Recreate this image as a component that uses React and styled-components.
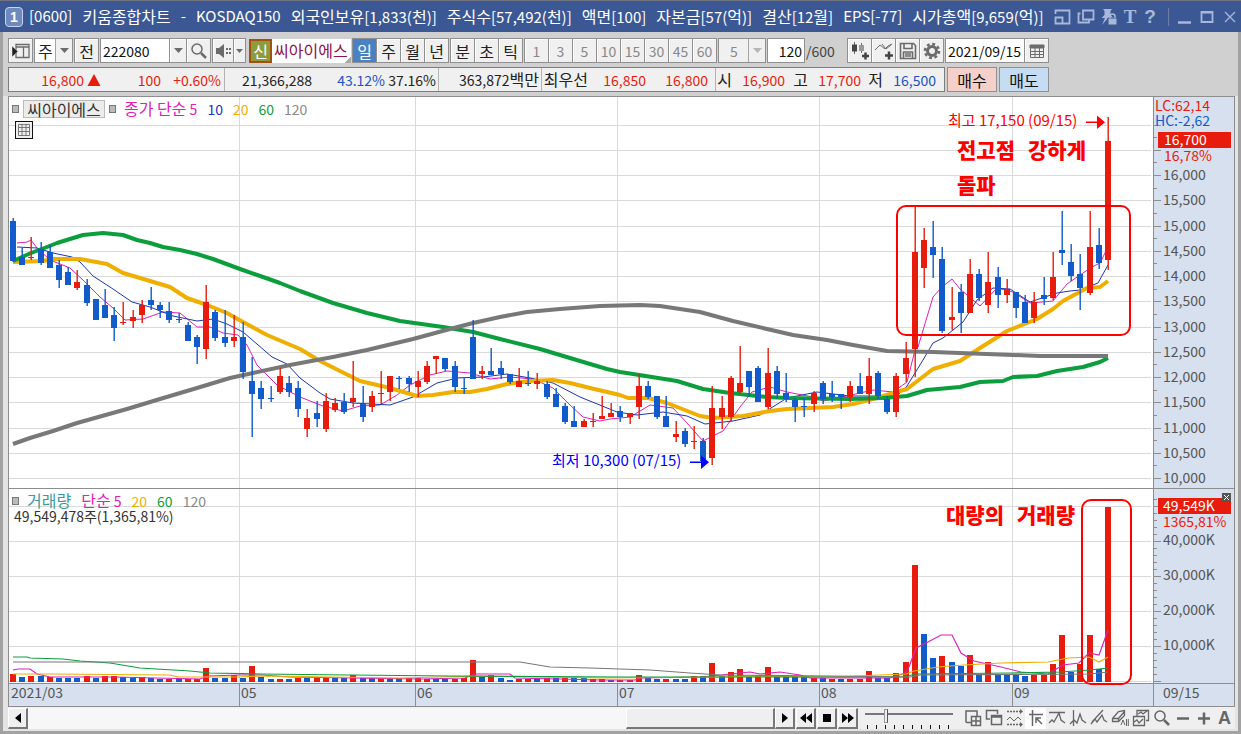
import { useState } from "react";
import styled, { createGlobalStyle } from "styled-components";

const RED = "#e81c0c";
const BLUE = "#115bcb";
const ICON = "#6b6b6b";

// one entry per trading day: [color, high, body top, body bottom, low]
const candles = [
  ["b", 218, 221, 261, 262], ["b", 248, 257, 265, 265], ["r", 237, 257, 258, 260], ["b", 242, 249, 263, 265],
  ["b", 245, 252, 268, 268], ["b", 260, 265, 280, 288], ["b", 267, 272, 285, 285], ["r", 270, 282, 288, 290],
  ["b", 279, 285, 303, 306], ["b", 299, 299, 320, 320], ["b", 289, 305, 318, 318], ["b", 307, 315, 328, 341],
  ["r", 302, 322, 323, 325], ["r", 310, 317, 321, 328], ["r", 300, 305, 315, 323], ["b", 287, 300, 305, 310],
  ["b", 302, 305, 310, 318], ["b", 302, 311, 320, 323], ["b", 313, 319, 320, 323], ["b", 322, 325, 341, 341],
  ["b", 335, 337, 347, 364], ["r", 285, 302, 349, 359], ["b", 310, 312, 338, 341], ["b", 310, 337, 343, 347],
  ["r", 315, 337, 341, 347], ["b", 322, 337, 372, 379], ["b", 357, 381, 394, 437], ["b", 381, 388, 399, 409],
  ["b", 386, 398, 399, 402], ["r", 368, 376, 392, 394], ["b", 376, 383, 392, 397], ["b", 381, 388, 409, 417],
  ["r", 409, 418, 429, 437], ["b", 401, 413, 419, 427], ["r", 393, 401, 429, 432], ["r", 398, 403, 410, 412],
  ["b", 393, 402, 412, 414], ["r", 361, 398, 402, 407], ["b", 386, 404, 417, 422], ["r", 391, 396, 407, 412],
  ["r", 371, 393, 394, 404], ["r", 376, 376, 392, 401], ["b", 376, 378, 379, 389], ["b", 376, 378, 384, 392],
  ["r", 371, 381, 387, 397], ["r", 361, 366, 382, 384], ["r", 356, 356, 359, 374], ["b", 358, 358, 369, 371],
  ["b", 361, 366, 387, 392], ["b", 378, 388, 389, 394], ["b", 320, 337, 379, 379], ["r", 366, 371, 374, 379],
  ["b", 348, 371, 375, 375], ["b", 361, 368, 374, 379], ["b", 374, 374, 382, 384], ["r", 368, 381, 387, 387],
  ["b", 371, 383, 384, 386], ["r", 373, 381, 384, 389], ["b", 381, 384, 397, 399], ["b", 388, 394, 407, 407],
  ["b", 403, 406, 422, 424], ["b", 406, 421, 427, 427], ["r", 419, 421, 427, 427], ["r", 413, 421, 422, 427],
  ["r", 396, 416, 419, 419], ["r", 403, 413, 417, 417], ["b", 406, 411, 417, 422], ["r", 413, 413, 417, 424],
  ["r", 374, 386, 407, 419], ["b", 381, 386, 397, 399], ["b", 396, 396, 417, 419], ["b", 396, 416, 427, 427],
  ["r", 421, 434, 437, 442], ["b", 428, 431, 444, 447], ["r", 426, 441, 442, 449], ["b", 438, 441, 461, 463],
  ["r", 386, 408, 458, 465], ["r", 396, 408, 417, 429], ["r", 376, 378, 417, 421], ["r", 346, 383, 392, 394],
  ["b", 371, 371, 387, 397], ["b", 366, 368, 402, 402], ["r", 348, 373, 407, 409], ["b", 366, 371, 394, 399],
  ["b", 373, 393, 399, 402], ["b", 398, 400, 407, 422], ["b", 398, 406, 407, 417], ["r", 391, 393, 404, 412],
  ["b", 381, 383, 399, 404], ["b", 381, 394, 397, 402], ["b", 394, 394, 397, 409], ["r", 381, 386, 397, 402],
  ["b", 373, 386, 394, 394], ["r", 358, 376, 394, 404], ["b", 371, 373, 396, 399], ["b", 396, 399, 412, 414],
  ["r", 373, 376, 412, 417], ["r", 342, 358, 374, 382], ["r", 207, 252, 349, 377], ["r", 228, 240, 268, 288],
  ["b", 221, 247, 255, 278], ["b", 247, 259, 331, 333], ["r", 287, 317, 320, 330], ["b", 284, 292, 313, 333],
  ["r", 259, 274, 313, 313], ["b", 269, 274, 298, 301], ["r", 252, 282, 305, 313], ["b", 267, 277, 295, 308],
  ["r", 279, 289, 295, 303], ["b", 292, 292, 308, 318], ["b", 295, 302, 323, 323], ["r", 292, 302, 318, 323],
  ["b", 277, 295, 299, 305], ["r", 252, 277, 298, 300], ["b", 211, 250, 253, 265], ["b", 244, 262, 276, 281],
  ["b", 254, 274, 288, 310], ["r", 211, 247, 293, 295], ["b", 228, 245, 263, 269], ["r", 117, 141, 260, 270],
];

const volumes =
  "r8 b5 r6 b6 r5 b4 b4 b4 r6 b4 r6 r6 b5 b4 r5 b4 b3 r3 b3 r3 r3 r14 b4 b4 r7 b4 r16 b5 b3 r3 b3 r4 b4 r4 r4 b4 b4 r7 b4 b4 r4 b4 b4 r4 r4 r3 b3 b3 r3 r4 r22 b5 r7 b4 b2 r3 r3 b4 r4 b4 r4 b4 b4 r3 r3 b2 r2 r2 r7 b4 b3 r3 b3 b3 r6 b6 r19 b6 r10 r13 b5 r6 r15 b5 b5 b5 b5 r4 b4 r3 b3 r3 r3 r11 b4 b4 r9 r20 r117 b48 b24 r26 b20 b16 r27 b8 r20 b8 b8 b7 b6 r7 r7 r18 r47 b10 r18 r47 b13 r175".split(
    " "
  );

const priceLines = [
  {
    color: "#e020b8",
    width: 1,
    points:
      "17,243 27,242 31,240 37,248 50,260 70,268 83,280 100,297 113,308 125,320 143,319 163,312 180,313 197,327 210,327 223,333 238,335 247,345 257,365 277,385 300,397 323,406 343,411 360,406 380,405 397,395 410,385 430,375 447,371 470,373 490,379 510,377 533,379 553,388 570,405 583,417 600,421 610,419 630,417 650,405 673,408 687,423 703,441 723,431 740,407 752,392 770,387 787,392 813,397 823,401 847,396 873,390 893,392 907,382 915,350 918,347 933,297 942,287 952,279 960,289 980,306 997,288 1013,292 1030,303 1053,301 1067,284 1080,275 1092,267 1100,263 1108,247",
  },
  {
    color: "#1c36b0",
    width: 1,
    points:
      "17,247 37,248 53,253 72,257 80,262 93,276 113,289 132,302 150,307 173,316 197,321 213,319 227,324 243,332 272,357 287,364 300,378 320,393 330,399 353,403 390,405 413,397 437,383 457,378 483,377 507,374 530,378 553,383 580,397 617,412 637,415 663,412 687,416 705,424 733,421 760,415 787,398 817,392 850,396 877,396 897,396 907,386 923,360 933,343 943,338 963,322 977,300 993,288 1010,289 1030,302 1057,293 1070,291 1080,290 1098,283 1108,265",
  },
  {
    color: "#f0ae00",
    width: 4,
    points:
      "13,262 43,261 53,259 80,259 107,264 123,273 140,278 170,287 187,298 207,305 227,313 243,322 267,335 300,349 320,361 360,381 390,388 417,396 433,395 453,392 470,392 487,389 507,384 530,381 553,380 570,383 590,388 620,395 628,398 648,398 667,403 700,416 713,418 743,416 770,411 787,409 833,407 853,404 873,399 890,394 907,389 933,369 960,361 980,348 1007,331 1037,319 1053,309 1063,301 1087,288 1100,287 1108,281",
  },
  {
    color: "#0c9e3c",
    width: 4,
    points:
      "13,261 31,253 47,247 57,243 70,239 83,235 103,233 123,235 137,240 150,243 163,247 180,250 197,254 213,259 240,269 263,277 280,283 300,291 333,303 367,313 400,321 443,327 473,332 500,339 540,349 580,361 607,369 620,372 633,374 677,381 703,389 730,393 767,397 787,398 850,399 883,398 907,396 927,390 960,387 980,382 1003,381 1013,377 1037,376 1057,371 1083,367 1100,362 1108,358",
  },
  {
    color: "#787878",
    width: 4,
    points:
      "13,444 30,438 53,431 77,423 127,409 160,399 197,388 230,378 253,373 290,365 333,357 367,350 413,339 450,329 473,323 500,317 527,312 560,309 600,306 640,305 660,306 700,312 733,321 767,329 793,335 827,340 853,345 887,351 933,352 1013,355 1040,356 1108,356",
  },
];

const volumeLines = [
  {
    color: "#e020b8",
    points:
      "13,670 18,669 30,669 37,674 50,677 115,677 155,678 200,679 208,676 240,675 262,675 290,677 420,679 465,678 475,674 510,674 515,678 600,680 635,680 640,678 700,677 712,676 730,674 750,672 760,674 780,672 800,675 810,678 890,678 905,673 909,667 916,648 928,642 941,635 952,635 961,653 974,661 1001,667 1021,672 1048,674 1063,665 1079,663 1089,653 1099,655 1108,630",
  },
  {
    color: "#f0ae00",
    points:
      "13,674 50,674 170,675 178,677 240,677 260,676 400,678 480,676 600,678 720,677 760,676 830,677 906,674 914,671 938,667 964,665 1001,663 1048,662 1068,658 1089,657 1099,662 1108,657",
  },
  {
    color: "#0c9e3c",
    points:
      "13,657 27,657 30,658 63,659 80,661 110,663 140,668 190,671 210,673 260,674 350,675 450,676 620,677 820,677 905,677 915,674 1010,673 1060,672 1090,670 1108,668",
  },
  {
    color: "#787878",
    points: "13,662 520,662 550,667 590,668 650,670 690,673 720,675 830,676 910,677 920,675 1090,674 1108,672",
  },
];

const months = [
  ["2021/03", 9],
  ["05", 239],
  ["06", 415],
  ["07", 617],
  ["08", 819],
  ["09", 1012],
];

const titleParts = [
  "[0600]",
  "키움종합차트",
  "-",
  "KOSDAQ150",
  "외국인보유[1,833(천)]",
  "주식수[57,492(천)]",
  "액면[100]",
  "자본금[57(억)]",
  "결산[12월]",
  "EPS[-77]",
  "시가총액[9,659(억)]",
];

const dayX = (i) => Math.round(13 + (i * 1095) / 119);
const priceY = (price) => Math.round(176 + (16000 - price) * 0.0505);
const volumeY = (thousands) => Math.round(681 - thousands * 0.0035);
const fill = (c) => (c === "r" ? RED : BLUE);
const prices = Array.from({ length: 15 }, (_, i) => 17000 - i * 500);

const PriceChart = () => (
  <ChartSvg viewBox="9 97 1225 391" role="img" aria-label="씨아이에스 일봉">
    <g stroke="#dadada">
      {prices.map((p) => (
        <path key={p} d={`M9 ${priceY(p) - 0.5}H1151`} />
      ))}
      {months.slice(1).map(([m, x]) => (
        <path key={m} d={`M${x + 0.5} 97V488`} />
      ))}
    </g>
    {priceLines.map(({ color, width, points }) => (
      <polyline key={color} points={points} fill="none" stroke={color} strokeWidth={width} strokeLinejoin="round" />
    ))}
    {candles.map(([c, high, top, bottom, low], i) => (
      <g key={i} fill={fill(c)}>
        <rect x={dayX(i) - 0.5} y={high} width="1.4" height={Math.max(low - high, 1)} />
        <rect x={dayX(i) - 3} y={top} width="6" height={Math.max(bottom - top, 1)} />
      </g>
    ))}
    <g fill="#f00" stroke="none">
      <Marker x="948" y="126">최고 17,150 (09/15)</Marker>
      <path d="M1086 121.5h11v-6l8 6.8-8 6.7v-6h-11z" />
    </g>
    <g fill="#00f">
      <Marker x="552" y="466">최저 10,300 (07/15)</Marker>
      <path d="M690 461.5h11v-6l8 6.8-8 6.7v-6h-11z" />
    </g>
    <Note x="957" y="158">전고점</Note>
    <Note x="1028" y="158">강하게</Note>
    <Note x="957" y="193">돌파</Note>
    <rect x="897" y="206" width="233" height="129" rx="9" fill="none" stroke="#f00" strokeWidth="2" />
    <rect x="1153" y="97" width="81" height="391" fill="#d6e0ee" />
    <path d="M1153.5 97V488" stroke="#8d8d8d" />
    <g stroke="#8d8d8d">
      {prices.map((p) => (
        <path key={p} d={`M1154 ${priceY(p) - 0.5}h7M1154 ${priceY(p - 250) - 0.5}h3`} />
      ))}
    </g>
    <g fill="#555">
      {prices.slice(2).map((p) => (
        <text key={p} x="1163" y={priceY(p) + 4}>
          {p.toLocaleString("en-US")}
        </text>
      ))}
    </g>
    <text x="1155" y="111" fill={RED}>LC:62,14</text>
    <text x="1155" y="126" fill={BLUE}>HC:-2,62</text>
    <rect x="1158" y="132" width="73" height="16" fill={RED} />
    <text x="1164" y="145" fill="#fff">16,700</text>
    <text x="1164" y="161" fill={RED}>16,78%</text>
  </ChartSvg>
);

const VolumeChart = () => (
  <ChartSvg viewBox="9 489 1225 194" role="img" aria-label="거래량">
    <g stroke="#dadada">
      {[50000, 40000, 30000, 20000, 10000, 0].map((v) => (
        <path key={v} d={`M9 ${volumeY(v) + 0.5}H1151`} />
      ))}
      {months.slice(1).map(([m, x]) => (
        <path key={m} d={`M${x + 0.5} 489V683`} />
      ))}
    </g>
    {volumes.map((v, i) => (
      <rect
        key={i}
        x={dayX(i) - 3}
        y={682 - Number(v.slice(1))}
        width="6"
        height={v.slice(1)}
        fill={fill(v[0])}
      />
    ))}
    {volumeLines.map(({ color, points }) => (
      <polyline key={color} points={points} fill="none" stroke={color} strokeWidth="1.2" />
    ))}
    <Note x="946" y="523">대량의</Note>
    <Note x="1017" y="523">거래량</Note>
    <rect x="1153" y="489" width="81" height="194" fill="#d6e0ee" />
    <path d="M1153.5 489V683" stroke="#8d8d8d" />
    <g stroke="#8d8d8d">
      {Array.from({ length: 27 }, (_, i) => (
        <path key={i} d={`M1154 ${volumeY(i * 2000) + 0.5}h${i % 5 ? 3 : 7}`} />
      ))}
    </g>
    <g fill="#555">
      {[40000, 30000, 20000, 10000].map((v) => (
        <text key={v} x="1163" y={volumeY(v) + 4}>
          {v.toLocaleString("en-US")}K
        </text>
      ))}
    </g>
    <rect x="1158" y="498" width="73" height="16" fill={RED} />
    <text x="1163" y="511" fill="#fff">49,549K</text>
    <text x="1163" y="527" fill={RED}>1365,81%</text>
    <rect x="1222" y="493" width="9" height="9" fill="#555" />
    <path d="M1224 495l5 5m0-5l-5 5" stroke="#fff" />
    <rect x="1082" y="500" width="49" height="184" rx="9" fill="none" stroke="#f00" strokeWidth="2" />
  </ChartSvg>
);

const DateAxis = () => (
  <ChartSvg viewBox="9 684 1225 22" role="img" aria-label="날짜">
    <rect x="9" y="684" width="1225" height="22" fill="#d6e0ee" />
    <g fill="#555">
      {months.map(([m, x]) => (
        <text key={m} x={x + 2} y="698">
          {m}
        </text>
      ))}
      <text x="1163" y="698">09/15</text>
    </g>
    <g stroke="#8d8d8d">
      {months.slice(1).map(([m, x]) => (
        <path key={m} d={`M${x + 0.5} 684v22`} />
      ))}
      <path d="M1153.5 684v22" />
    </g>
  </ChartSvg>
);

const Icon = ({ w = 18, h = 18, children }) => (
  <svg width={w} height={h} viewBox={`0 0 ${w} ${h}`} fill="none" stroke="currentColor" aria-hidden="true">
    {children}
  </svg>
);

const Down = () => (
  <Icon w={9} h={5}>
    <path d="M0 0h9L4.500 5z" fill="currentColor" stroke="none" />
  </Icon>
);

const windowIcons = [
  ["배치", <path key="a" d="M1.500 6V2.500h14v13H9M1.500 9.500h7v6h-7z" strokeWidth="1.800" />],
  ["복사", <path key="b" d="M6 2.500h10.500v9H6zM3.500 5.500H1.500v9H12v-2" strokeWidth="1.800" />],
  [
    "고정",
    <g key="c">
      <path d="M3 1h9l-1.500 2v4l3 3H8l-6 7 3-7H1.500l3-3V3z" fill="currentColor" stroke="none" />
      <path d="M8 10h9v7H8z" fill="currentColor" stroke="#3b5894" />
      <path d="M10 10V8.500a2.500 2.500 0 0 1 5 0V10" strokeWidth="1.500" />
    </g>,
  ],
];

const toolIcons = [
  ["차트 추가", <path key="a" d="M7 13.500H3a1 1 0 0 1-1-1V2h11v5M7.500 7.500h9v9h-9zM12 7.500v9M7.500 12h9" strokeWidth="1.500" />],
  ["창 겹치기", <path key="b" d="M5 10H1.500V1.500h11V5M6.500 6.500h10v9h-10zM6.500 8h10" strokeWidth="1.500" />],
  [
    "구간",
    <g key="c">
      <path d="M1 2.500h13M1 15.500h13" strokeDasharray="2 1" strokeWidth="1.500" />
      <path d="M14 0l3 2.500L14 5zM14 13l3 2.500-3 2.500z" fill="currentColor" stroke="none" />
      <path d="M1 11l3-3 4 4 4-4 3 3" />
    </g>,
  ],
  [
    "십자선",
    <g key="d">
      <path d="M2 5.500h14M5.500 1v16" strokeWidth="1.500" />
      <path d="M9 9l6 6M9 14V9h5" strokeWidth="1.500" />
    </g>,
  ],
  ["수평선", <path key="e" d="M1 3.500h16M1 14l3-3 2 2 5-9 2 7 4 3" strokeWidth="1.300" />],
  ["수직선", <path key="f" d="M4.500 1v16M1 15l4-4 3 3 3-9 2 6 4 3" strokeWidth="1.300" />],
  ["추세선", <path key="g" d="M2 13L13 1M1 15l4-5 2 3 5-7 2 5 3 2" strokeWidth="1.300" />],
  [
    "지우개",
    <g key="h">
      <path d="M1.500 9.500l6-7 6-1v5l-6 6h-6zM1.500 9.500h6v3M7.500 9.500l6-7" strokeWidth="1.300" />
      <path d="M10 16l2-5 2 5M15.500 10v7M17.300 10v7" />
    </g>,
  ],
  [
    "이미지",
    <path key="i" d="M5 7V1.500h11.500v10H14M1.500 7.500h11v9h-11zM2 13l3-2 2 3 4-4M6 5l3-2 2 2 4-3" strokeWidth="1.300" />,
  ],
  [
    "확대경",
    <g key="j">
      <circle cx="7" cy="7" r="5" strokeWidth="1.500" />
      <path d="M11 11l5 5" strokeWidth="2.500" />
    </g>,
  ],
  ["축소", <path key="k" d="M3 9.500h12" strokeWidth="2.500" />],
  ["확대", <path key="l" d="M3 9.500h12M9 3.500v12" strokeWidth="2.500" />],
];

const App = () => {
  const [period, setPeriod] = useState("일");
  const [code, setCode] = useState("222080");
  const [count, setCount] = useState("120");
  const [date, setDate] = useState("2021/09/15");
  const [speed, setSpeed] = useState(2);

  return (
    <Window>
      <GlobalStyle />
      <TitleBar>
        <Badge>1</Badge>
        <Title>
          {titleParts.map((part) => (
            <span key={part}>
              {part.split(/([가-힣]+)/).map((run, i) => (i % 2 ? <Ko key={i}>{run}</Ko> : run))}
            </span>
          ))}
        </Title>
        <WindowButtons>
          {windowIcons.map(([label, icon]) => (
            <TitleButton key={label} aria-label={label}>
              <Icon>{icon}</Icon>
            </TitleButton>
          ))}
          <TitleButton $narrow $serif>T</TitleButton>
          <TitleButton $narrow>?</TitleButton>
          <Rule />
          <TitleButton aria-label="최소화">
            <Icon><path d="M3 14.500h13" strokeWidth="2.500" /></Icon>
          </TitleButton>
          <TitleButton aria-label="최대화">
            <Icon><path d="M3.500 4h11v10h-11zM3 4.500h12" strokeWidth="1.800" /></Icon>
          </TitleButton>
          <TitleButton aria-label="닫기">
            <Icon><path d="M4 4l10 10M14 4L4 14" strokeWidth="1.300" /></Icon>
          </TitleButton>
        </WindowButtons>
      </TitleBar>

      <Top>
        <Bar>
          <ToolButton aria-label="메뉴">
            <Icon>
              <path d="M4 2.500h13v13H4zM4 5h13M11.500 5v10" strokeWidth="1.300" />
              <path d="M0 4l6 5.500L0 15z" fill="#222" stroke="#eee" strokeWidth="0.500" />
            </Icon>
          </ToolButton>
          <SelectBox $width={39}>
            <select aria-label="종목 구분" defaultValue="주">
              <option>주</option>
              <option>업</option>
            </select>
            <Arrow><Down /></Arrow>
          </SelectBox>
          <ToolButton>전</ToolButton>
          <Joined>
            <Field
              aria-label="종목코드"
              $width={70}
              value={code}
              onChange={(e) => setCode(e.target.value)}
            />
            <ToolButton $width={18} aria-label="최근 종목"><Down /></ToolButton>
            <ToolButton aria-label="검색">
              <Icon>
                <circle cx="7" cy="7" r="5" strokeWidth="1.500" />
                <path d="M11 11l5 5" strokeWidth="2.500" />
              </Icon>
            </ToolButton>
          </Joined>
          <Joined>
            <ToolButton $width={22} aria-label="소리">
              <Icon w={16}>
                <path d="M1 6h3l5-4v14l-5-4H1z" fill="currentColor" stroke="none" />
                <path d="M11 7h2M14 7h2M11 11h2M14 11h2" strokeWidth="2" />
              </Icon>
            </ToolButton>
            <ToolButton $width={13} aria-label="소리 설정">
              <Icon w={7} h={4}><path d="M0 0h7L3.500 4z" fill="currentColor" stroke="none" /></Icon>
            </ToolButton>
          </Joined>
          <Joined $gap={2}>
            <Tag>신</Tag>
            <StockName>씨아이에스</StockName>
          </Joined>
          <Joined>
            {["일", "주", "월", "년"].map((p) => (
              <ToolButton key={p} $active={p === period} onClick={() => setPeriod(p)}>
                {p}
              </ToolButton>
            ))}
          </Joined>
          <Joined>
            {["분", "초", "틱"].map((p) => (
              <ToolButton key={p} $active={p === period} onClick={() => setPeriod(p)}>
                {p}
              </ToolButton>
            ))}
          </Joined>
          <Joined>
            {[1, 3, 5, 10, 15, 30, 45, 60].map((n) => (
              <ToolButton key={n} disabled>{n}</ToolButton>
            ))}
          </Joined>
          <SelectBox $width={48}>
            <select aria-label="분 단위" disabled defaultValue="5">
              <option>5</option>
            </select>
            <Arrow $off><Down /></Arrow>
          </SelectBox>
          <Joined>
            <Field
              aria-label="조회 개수"
              $width={38}
              $end
              value={count}
              onChange={(e) => setCount(e.target.value)}
            />
            <Total>/600</Total>
          </Joined>
          <Joined>
            <ToolButton aria-label="봉 추가">
              <Icon>
                <path d="M3.500 0v12M10.500 1v10" />
                <path d="M1 2.500h5v7H1z" fill="#444" stroke="none" />
                <path d="M8 3h5v6H8z" fill="#999" stroke="none" />
                <path d="M11 14h7M14.500 10.500v7" strokeWidth="2.500" stroke="#444" />
              </Icon>
            </ToolButton>
            <ToolButton aria-label="지표 추가">
              <Icon>
                <path d="M0 8l5-5 5 4 3-3 4-2M7 2l4 5 5-4" />
                <path d="M10 13.500h8M14 9.500v8" strokeWidth="2.500" stroke="#444" />
              </Icon>
            </ToolButton>
            <ToolButton aria-label="저장">
              <Icon>
                <path d="M1.500 1.500h13l2 2v13h-15zM5 1.500v5h8v-5M4.500 16v-6h9v6M6 12h6M6 14h6" strokeWidth="1.600" />
              </Icon>
            </ToolButton>
            <ToolButton aria-label="설정">
              <Icon>
                <circle cx="9" cy="9" r="4.500" strokeWidth="3" />
                <circle cx="9" cy="9" r="7" strokeWidth="2.500" strokeDasharray="2.900 2.600" />
              </Icon>
            </ToolButton>
          </Joined>
          <Joined>
            <Field aria-label="날짜" $width={80} value={date} onChange={(e) => setDate(e.target.value)} />
            <ToolButton aria-label="달력">
              <Icon w={16} h={14}>
                <path d="M1 1h14v3H1z" fill="currentColor" />
                <path d="M1.500 4v9.500h13V4M6 4v9M10.500 4v9M2 7.500h12M2 10.500h12" />
              </Icon>
            </ToolButton>
          </Joined>
        </Bar>

        <Bar $gap={2}>
          <Quote>
            <Group $width={215}>
              <Value $width={75} $color={RED}>16,800</Value>
              <Icon w={14} h={12}><path d="M7 0l6.500 12H.500z" fill={RED} stroke="none" /></Icon>
              <Value $width={60} $color={RED}>100</Value>
              <Value $width={60} $color={RED}>+0.60%</Value>
            </Group>
            <Group $width={214}>
              <Value $width={87}>21,366,288</Value>
              <Value $width={73} $color="#2050c8">43.12%</Value>
              <Value $width={51}>37.16%</Value>
            </Group>
            <Group $width={103}>
              <Value $width={100}>363,872<Ko>백만</Ko></Value>
            </Group>
            <Group $width={174}>
              <Value $width={46}><Ko>최우선</Ko></Value>
              <Value $width={58} $color={RED}>16,850</Value>
              <Value $width={62} $color={RED}>16,800</Value>
            </Group>
            <Group $width={228}>
              <Value $width={16}><Ko>시</Ko></Value>
              <Value $width={53} $color={RED}>16,900</Value>
              <Value $width={23}><Ko>고</Ko></Value>
              <Value $width={53} $color={RED}>17,700</Value>
              <Value $width={22}><Ko>저</Ko></Value>
              <Value $width={53} $color="#2050c8">16,500</Value>
            </Group>
          </Quote>
          <OrderButton $bg="#f5cfc9">매수</OrderButton>
          <OrderButton $bg="#c6dcf2">매도</OrderButton>
        </Bar>
      </Top>

      <Body>
        <Frame>
          <Panel>
            <PriceChart />
            <Legend>
              <Dot />
              <NameButton>씨아이에스</NameButton>
              <Dot />
              <Key $color="#e020b8"><Ko>종가 단순</Ko> 5</Key>
              <Key $color="#1c36c0">10</Key>
              <Key $color="#f0ae00">20</Key>
              <Key $color="#0c9e3c">60</Key>
              <Key $color="#888">120</Key>
            </Legend>
            <GridButton aria-label="표 보기">
              <Icon w={14} h={14}>
                <path d="M1.500 1.500h11v11h-11zM1.500 4.500h11M1.500 8.500h11M5 1.500v11M9 1.500v11" />
              </Icon>
            </GridButton>
          </Panel>
          <Panel $raised>
            <VolumeChart />
            <Legend>
              <Dot />
              <Key $color="#3a9aa0"><Ko>거래량</Ko></Key>
              <Key $color="#e020b8"><Ko>단순</Ko> 5</Key>
              <Key $color="#f0ae00">20</Key>
              <Key $color="#0c9e3c">60</Key>
              <Key $color="#888">120</Key>
            </Legend>
            <VolumeText>49,549,478주(1,365,81%)</VolumeText>
          </Panel>
          <Panel>
            <DateAxis />
          </Panel>
        </Frame>

        <Footer>
          <ScrollButton aria-label="왼쪽">
            <Icon w={6} h={10}><path d="M6 0v10L0 5z" fill="#000" stroke="none" /></Icon>
          </ScrollButton>
          <Track><Thumb /></Track>
          <Player>
            <ScrollButton aria-label="오른쪽">
              <Icon w={6} h={10}><path d="M0 0v10l6-5z" fill="#000" stroke="none" /></Icon>
            </ScrollButton>
            <ScrollButton aria-label="뒤로">
              <Icon w={12} h={10}><path d="M6 0v10L0 5zM12 0v10L6 5z" fill="#000" stroke="none" /></Icon>
            </ScrollButton>
            <ScrollButton aria-label="정지">
              <Icon w={8} h={8}><path d="M0 0h8v8H0z" fill="#000" stroke="none" /></Icon>
            </ScrollButton>
            <ScrollButton aria-label="앞으로">
              <Icon w={12} h={10}><path d="M0 0v10l6-5zM6 0v10l6-5z" fill="#000" stroke="none" /></Icon>
            </ScrollButton>
          </Player>
          <Slider
            type="range"
            min="0"
            max="9"
            aria-label="속도"
            value={speed}
            onChange={(e) => setSpeed(e.target.value)}
          />
          <Tools>
            {toolIcons.map(([label, icon]) => (
              <PlainButton key={label} aria-label={label} $pressed={label === "십자선"}>
                <Icon>{icon}</Icon>
              </PlainButton>
            ))}
            <PlainButton>A</PlainButton>
          </Tools>
        </Footer>
      </Body>
    </Window>
  );
};

const GlobalStyle = createGlobalStyle`
  * {
    box-sizing: border-box;
  }

  body {
    margin: 0;
    background: #e4e4e4;
  }

  body, button, input, select, text {
    font-family: "Noto Sans CJK KR", sans-serif;
    font-size: 14px;
    line-height: 20px;
  }

  button {
    padding: 0;
    cursor: pointer;
  }

  svg {
    flex: none;
  }
`;

const Window = styled.main`
  min-height: 100vh;
  background: #d0d0d0;
  white-space: nowrap;
  overflow: hidden;
  display: flex;
  flex-direction: column;
`;

// hangul runs are set larger than the digits beside them
const Ko = styled.span`
  font-size: 16px;
`;

const TitleBar = styled.header`
  height: 32px;
  padding-left: 5px;
  border-top: 1px solid #6f7480;
  background: #3b5894;
  color: #fff;
  display: flex;
  align-items: center;
`;

const Badge = styled.span`
  width: 18px;
  height: 20px;
  border: 1px solid #c8d4ee;
  border-radius: 4px;
  background: #7089bd;
  font: bold 14px/18px "Liberation Sans", sans-serif;
  text-align: center;
`;

const Title = styled.h1`
  flex: 1;
  min-width: 0;
  margin: 0 5px 0 6px;
  overflow: hidden;
  font-size: 15px;
  font-weight: normal;
  line-height: 30px;
  display: flex;
  gap: 10px;
`;

const WindowButtons = styled.div`
  display: flex;
  align-items: center;
`;

const TitleButton = styled.button`
  width: ${({ $narrow }) => ($narrow ? 20 : 23)}px;
  height: 24px;
  padding: 0;
  border: 0;
  background: none;
  color: #a9b8d8;
  font: bold 19px/24px ${({ $serif }) => ($serif ? '"Liberation Serif", serif' : '"Liberation Sans", sans-serif')};
  display: flex;
  align-items: center;
  justify-content: center;
`;

const Rule = styled.span`
  width: 1px;
  height: 18px;
  margin: 0 3px 0 8px;
  background: #6d7fa8;
`;

const Top = styled.div`
  padding: 6px 5px 4px;
  border: solid #a2a2a2;
  border-width: 0 3px;
  display: flex;
  flex-direction: column;
  gap: 4px;
`;

const Bar = styled.div`
  display: flex;
  align-items: center;
  gap: ${({ $gap = 1 }) => $gap}px;
`;

const Joined = styled.div`
  display: flex;
  align-items: center;
  margin-left: ${({ $gap = 0 }) => $gap}px;

  > * + button {
    margin-left: -1px;
  }
`;

const ToolButton = styled.button`
  width: ${({ $width = 25 }) => $width}px;
  height: 25px;
  border: 1px solid #8f8f8f;
  background: ${({ $active }) => ($active ? "#4a80c4" : "#f0f0f0")};
  box-shadow: inset 1px 1px ${({ $active }) => ($active ? "#4a80c4" : "#fff")};
  color: ${({ $active }) => ($active ? "#fff" : "#222")};
  font-size: 16px;
  display: flex;
  align-items: center;
  justify-content: center;

  svg {
    color: ${ICON};
  }

  &:disabled {
    color: #888;
    font-size: 14px;
    cursor: default;
  }
`;

const Field = styled.input`
  width: ${({ $width }) => $width}px;
  height: 25px;
  padding: 0 2px;
  border: 1px solid #8f8f8f;
  border-radius: 0;
  background: #fff;
  color: #111;
  text-align: ${({ $end }) => ($end ? "right" : "left")};
`;

const SelectBox = styled.label`
  position: relative;

  select {
    width: ${({ $width }) => $width}px;
    height: 25px;
    padding: 0 17px 0 3px;
    border: 1px solid #8f8f8f;
    border-radius: 0;
    background: #fff;
    color: #222;
    font-size: 16px;
    appearance: none;
    display: block;
  }

  select:disabled {
    padding-left: 11px;
    background: #f0f0f0;
    color: #888;
    font-size: 14px;
    opacity: 1;
  }
`;

const Arrow = styled.span`
  position: absolute;
  top: 1px;
  right: 1px;
  width: 17px;
  height: 23px;
  border-left: 1px solid #a4a4a4;
  background: #f0f0f0;
  color: ${({ $off }) => ($off ? "#b5b5b5" : ICON)};
  pointer-events: none;
  display: flex;
  align-items: center;
  justify-content: center;
`;

const Tag = styled.span`
  width: 23px;
  height: 24px;
  border: 2px solid #a05010;
  background: #8c9c3c;
  color: #fff;
  font-size: 16px;
  text-align: center;
`;

const StockName = styled.span`
  width: 79px;
  height: 24px;
  padding: 1px 2px;
  background: linear-gradient(135deg, #fff 94%, #aaa 94%);
  color: #901050;
  font-size: 16px;
`;

const Total = styled.span`
  width: 41px;
  padding-left: 1px;
  color: #444;
`;

const Quote = styled.section`
  width: 937px;
  height: 25px;
  border: 1px solid #7d7d7d;
  background: #f0f0f0;
  display: flex;
`;

const Group = styled.div`
  width: ${({ $width }) => $width}px;
  display: flex;
  align-items: center;

  & + & {
    border-left: 1px solid #b4b4b4;
  }

  svg {
    margin-left: 3px;
  }
`;

const Value = styled.span`
  width: ${({ $width }) => $width}px;
  color: ${({ $color = "#222" }) => $color};
  text-align: right;
`;

const OrderButton = styled.button`
  width: 50px;
  height: 25px;
  border: 1px solid #8f8f8f;
  background: ${({ $bg }) => $bg};
  color: #111;
  font-size: 16px;
`;

const Body = styled.div`
  flex: 1;
  padding: 0 3px 2px 5px;
  border: solid #a2a2a2;
  border-width: 0 3px 3px;
  background: #e4e4e4;
`;

const Frame = styled.div`
  border: 1px solid #8d8d8d;
  background: #fff;
`;

const Panel = styled.section`
  position: relative;
  z-index: ${({ $raised }) => ($raised ? 1 : 0)};

  & + & {
    border-top: 1px solid #8d8d8d;
  }
`;

const ChartSvg = styled.svg`
  display: block;
  width: 100%;
  height: auto;
  overflow: visible;
`;

const Marker = styled.text`
  font-size: 15px;
`;

const Note = styled.text`
  fill: #f00;
  font-size: 21px;
  font-weight: 900;
`;

const Legend = styled.div`
  position: absolute;
  top: 1px;
  left: 3px;
  display: flex;
  align-items: center;
  gap: 4px;
`;

const Dot = styled.span`
  width: 7px;
  height: 8px;
  border: 1px solid #777;
  background: #bbb;
`;

const NameButton = styled.button`
  width: 82px;
  height: 18px;
  border: 1px solid #bbb;
  background: #ececec;
  color: #333;
  font-size: 16px;
  line-height: 16px;
`;

const Key = styled.span`
  margin: 0 2px 0 4px;
  color: ${({ $color }) => $color};
`;

const GridButton = styled.button`
  position: absolute;
  top: 24px;
  left: 6px;
  width: 18px;
  height: 18px;
  border: 1px solid #111;
  background: #eee;
  color: #777;
  display: flex;
  align-items: center;
  justify-content: center;
`;

const VolumeText = styled.p`
  position: absolute;
  top: 17px;
  left: 5px;
  margin: 0;
  color: #333;
`;

const Footer = styled.footer`
  height: 22px;
  background: #efefef;
  display: flex;
  align-items: center;
`;

const ScrollButton = styled.button`
  width: 20px;
  height: 21px;
  border: 1px solid #fff;
  border-right: 2px solid #777;
  border-bottom: 2px solid #777;
  background: #efefef;
  display: flex;
  align-items: center;
  justify-content: center;
`;

const Track = styled.div`
  flex: 1;
  height: 21px;
  background: #f7f7f7;
  display: flex;
  justify-content: flex-end;
`;

const Thumb = styled.div`
  width: 20%;
  height: 21px;
  border: 1px solid #fff;
  border-right: 2px solid #777;
  border-bottom: 2px solid #777;
  background: #efefef;
`;

const Player = styled.div`
  display: flex;
  gap: 1px;
`;

const Slider = styled.input`
  width: 88px;
  height: 21px;
  margin: 0 9px 0 7px;
  appearance: none;
  background:
    linear-gradient(#777, #777) 0 5px / 100% 2px no-repeat,
    repeating-linear-gradient(90deg, #111 0 1px, transparent 1px 9px) 2px 17px / 100% 4px no-repeat;

  &::-webkit-slider-thumb {
    appearance: none;
    width: 4px;
    height: 14px;
    margin-top: -4px;
    border: 1px solid #999;
    border-right: 1px solid #555;
    background: #efefef;
  }
`;

const Tools = styled.div`
  display: flex;
`;

const PlainButton = styled.button`
  width: 21px;
  height: 21px;
  border: 0;
  background: ${({ $pressed }) => ($pressed ? "#fff" : "none")};
  color: #666;
  font: bold 18px/21px "Liberation Sans", sans-serif;
  display: flex;
  align-items: center;
  justify-content: center;
`;

export default App;
